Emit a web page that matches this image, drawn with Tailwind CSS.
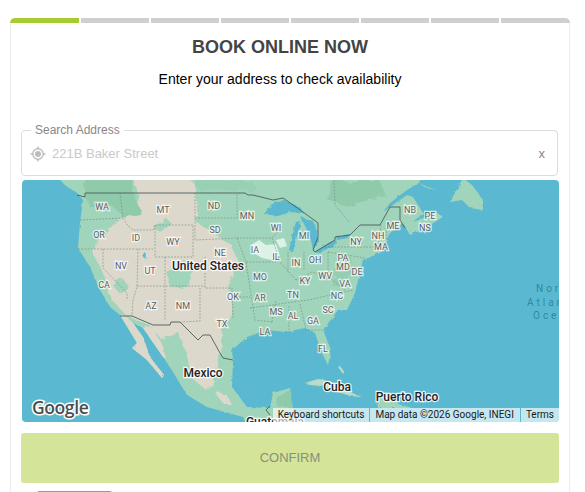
<!DOCTYPE html>
<html lang="en">
<head>
<meta charset="UTF-8">
<title>Book Online Now</title>
<meta name="viewport" content="width=device-width,initial-scale=1">
<script src="https://cdn.jsdelivr.net/npm/@tailwindcss/browser@4"></script>
</head>

<body class="bg-white h-[492px] overflow-hidden font-['Liberation_Sans',Arial,sans-serif]">
<div class="pt-[18px] px-[10px]">
  <div class="w-[560px] h-[600px] border-x border-[#ececec] rounded-t-[5px] relative">

    <!-- steps -->
    <div class="flex gap-[2px] -mx-px overflow-hidden rounded-t-[5px]">
      <div class="h-[5px] w-[69px] bg-[#a8cc2e]"></div>
      <div class="h-[5px] w-[68px] bg-[#cfcfcf]"></div>
      <div class="h-[5px] w-[68px] bg-[#cfcfcf]"></div>
      <div class="h-[5px] w-[68px] bg-[#cfcfcf]"></div>
      <div class="h-[5px] w-[68px] bg-[#cfcfcf]"></div>
      <div class="h-[5px] w-[68px] bg-[#cfcfcf]"></div>
      <div class="h-[5px] w-[68px] bg-[#cfcfcf]"></div>
      <div class="h-[5px] w-[69px] bg-[#cfcfcf]"></div>
    </div>

    <h1 class="text-[18px] leading-[20px] font-bold text-[#444] text-center mt-[14px] pr-[20px]">BOOK ONLINE NOW</h1>
    <p class="text-[14px] leading-[20px] text-black text-center mt-[12px] pr-[20px]">Enter your address to check availability</p>

    <!-- address -->
    <fieldset class="ml-[10px] w-[537px] h-[53px] mt-[34px] border border-[#dcdcdc] rounded-[4px] pl-[8px] pr-[12px] flex items-center">
      <legend class="ml-[1px] px-[4px] text-[12px] leading-[14px] text-[#888]">Search Address</legend>
      <div class="flex items-center w-full h-[41px] -mt-[4px]">
        <svg class="w-[16px] h-[16px] shrink-0" viewBox="0 0 16 16" fill="none" stroke="#bdbdbd">
          <circle cx="8" cy="8" r="5.2" stroke-width="1.4"/>
          <circle cx="8" cy="8" r="3" fill="#bdbdbd" stroke="none"/>
          <path d="M8 0.5v2.5M8 13v2.5M0.5 8h2.5M13 8h2.5" stroke-width="1.4"/>
        </svg>
        <span class="ml-[6px] text-[13px] text-[#c9c9c9]">221B Baker Street</span>
        <span class="ml-auto text-[13px] text-[#888]">x</span>
      </div>
    </fieldset>

    <!-- map -->
    <div class="relative ml-[11px] mt-[4px] w-[537px] h-[242px] rounded-[4px] overflow-hidden bg-[#5ab9d0]">
      <svg class="block w-[537px] h-[242px]" viewBox="22 180 537 242">
        <defs>
          <filter id="rough" x="-5%" y="-5%" width="110%" height="110%">
            <feTurbulence type="fractalNoise" baseFrequency="0.09" numOctaves="3" seed="4"/>
            <feDisplacementMap in="SourceGraphic" scale="9"/>
          </filter>
          <filter id="fine" x="-5%" y="-5%" width="110%" height="110%">
            <feTurbulence type="fractalNoise" baseFrequency="0.2" numOctaves="2" seed="7"/>
            <feDisplacementMap in="SourceGraphic" scale="3"/>
          </filter>
        </defs>
        <!-- land -->
        <g filter="url(#fine)">
          <path fill="#a0d5bb" d="M58,178 L66,186 L77,193 L83,200 L80,223 L78,248 L90,267 L100,290 L110,307 L120,315 L137,343 L132,348 L147,360 L162,378 L164,375 L150,357 L143,337 L133,323 L143,328 L163,357 L173,372 L187,395 L207,407 L243,417 L247,425 L290,425 L293,410 L290,388 L273,393 L270,408 L247,407 L232,387 L233,360 L232,350 L247,337 L267,330 L285,332 L305,328 L315,333 L322,353 L328,365 L331,350 L323,330 L338,310 L347,310 L355,293 L363,260 L380,253 L390,233 L403,223 L410,235 L425,228 L443,217 L437,213 L423,218 L413,222 L423,213 L413,197 L407,195 L383,212 L390,203 L407,190 L427,178 Z"/>
          <path fill="#a0d5bb" d="M450,202 L463,178 L472,185 L483,200 L483,210 L470,208 L462,200 Z"/>
          <path fill="#a0d5bb" d="M420,184 L432,188 L436,190 L425,187 Z"/>
          <path fill="#b9dcc8" d="M305,383 L318,379 L330,381 L345,390 L362,397 L350,396 L335,391 L322,386 L310,385 Z"/>
          <path fill="#a0d5bb" d="M377,397 L392,394 L398,404 L412,408 L378,408 Z"/>
          <path fill="#b9dcc8" d="M340,365 L344,372 L343,374 L339,368 Z"/>
          <!-- Baja and the Sonora coast are dry -->
          <path fill="#ddd8cc" d="M120,315 L137,343 L132,348 L147,360 L162,378 L164,375 L150,357 L143,337 L133,323 L126,316 Z"/>
          <path fill="#ddd8cc" d="M143,328 L152,326 L162,345 L166,358 L163,357 Z"/>
        </g>
        <!-- tan -->
        <g filter="url(#rough)">
          <path fill="#ddd8cc" d="M135,176 L196,176 L196,222 L232,245 L238,262 L230,285 L232,312 L222,330 L222,345 L216,352 L218,372 L208,392 L192,378 L186,352 L178,332 L160,338 L150,326 L125,314 L112,300 L104,275 L92,250 L104,232 L118,218 L140,214 L138,198 Z"/>
          <path fill="#ddd8cc" d="M215,392 L226,394 L231,404 L222,402 Z"/>
          <path fill="#8fcbab" d="M84,176 L134,176 L132,192 L142,212 L125,218 L112,206 L88,206 Z"/>
          <path fill="#a0d5bb" d="M152,226 L166,218 L172,224 L160,232 Z"/>
          <path fill="#a0d5bb" d="M166,272 L186,262 L194,272 L184,286 L172,288 Z"/>
          <path fill="#a0d5bb" d="M94,234 L106,226 L110,232 L98,244 Z"/>
          <path fill="#a0d5bb" d="M112,284 L122,278 L128,286 L118,292 Z"/>
          <path fill="#a0d5bb" d="M198,196 L214,200 L210,212 L200,216 Z" opacity="0.6"/>
          <path fill="#8fcbab" d="M276,396 L290,390 L292,408 L278,408 Z"/>
          <path fill="#8fcbab" d="M330,182 L380,180 L386,196 L345,206 L325,198 Z"/>
          <path fill="#8fcbab" d="M190,180 L250,180 L258,190 L200,190 Z" opacity="0.5"/>
          <path fill="#8fcbab" d="M338,262 L350,254 L354,274 L342,288 L332,286 Z" opacity="0.7"/>
        </g>
        <!-- Iowa/Illinois pale patches -->
        <path fill="#dcf2e6" d="M251,245 L259,240 L266,245 L276,244 L280,256 L272,260 L262,258 L252,252 Z"/>
        <path fill="#dcf2e6" d="M276,240 L284,238 L287,246 L280,248 Z"/>
        <!-- lakes -->
        <g filter="url(#fine)" fill="#5ab9d0">
          <path d="M264,214 L272,204 L284,200 L300,207 L304,214 L290,212 L278,216 Z"/>
          <path d="M296,222 L301,221 L297,236 L293,252 L289,250 L292,236 Z"/>
          <path d="M300,216 L314,222 L319,240 L313,250 L311,240 L306,228 Z"/>
          <path d="M314,252 L330,242 L336,240 L337,243 L320,253 Z"/>
          <path d="M336,236 L350,234 L348,238 L337,240 Z"/>
          <path d="M144,252 L146,254 L145,259 L143,256 Z"/>
        </g>
        <!-- state lines -->
        <g fill="none" stroke="#76857f" stroke-width="0.6" stroke-dasharray="1.8 1.4">
          <path d="M80,220 L123,218"/>
          <path d="M120,193 L123,218 L128,226 L133,230 L153,230 L155,225 L193,225 M155,225 L155,257 L193,257 L193,225"/>
          <path d="M78,249 L153,249"/>
          <path d="M103,249 L103,268 L127,293 L127,300"/>
          <path d="M138,249 L137,287 L133,300 L132,316"/>
          <path d="M137,286 L205,286"/>
          <path d="M165,257 L165,320 M205,257 L205,288 L232,288 L233,318"/>
          <path d="M200,288 L200,321 L181,322"/>
          <path d="M195,193 L195,240 L237,238 L246,262 L250,288 L255,320 L272,322"/>
          <path d="M195,218 L237,218 L237,193"/>
          <path d="M237,238 L272,238 L283,226 M272,238 L280,262 L296,280"/>
          <path d="M246,262 L276,262"/>
          <path d="M233,297 L250,297 M250,308 L308,300 L353,290"/>
          <path d="M272,322 L276,300 M289,306 L289,330 M300,304 L306,330 L322,330"/>
          <path d="M288,252 L288,272 M304,252 L304,270 M328,252 L328,277 M328,252 L365,258 M325,247 L366,247"/>
          <path d="M296,280 L312,272 L328,277 L345,290"/>
          <path d="M381,225 L378,252 M386,228 L387,240 M366,247 L378,247"/>
          <path d="M334,180 L335,205 L350,223"/>
        </g>
        <!-- borders -->
        <g fill="none" stroke="#4d5c5e" stroke-width="0.9">
          <path d="M77,195 L85,197 L85,193 L245,193 L248,195 L253,195 L273,200 L283,198 L303,212 L318,223 L318,237 L313,250 L315,252 L335,240 L335,237 L350,235 L360,225 L380,225 L390,207 L400,207 L400,220 L405,228"/>
          <path d="M120,316 L132,316 L153,325 L170,325 L171,322 L180,322 L190,332 L198,340 L203,335 L210,335 L220,353 L223,358 L233,360"/>
          <path d="M270,415 L266,410 L270,406"/>
        </g>
        <!-- labels -->
        <g font-family="Roboto, sans-serif" font-size="9" text-anchor="middle" fill="#5a5f63" stroke="#fff" stroke-opacity="0.7" stroke-width="2.5" paint-order="stroke">
          <text x="102" y="210">WA</text><text x="163" y="213">MT</text><text x="214" y="209">ND</text><text x="247" y="219">MN</text>
          <text x="99" y="238">OR</text><text x="136" y="241">ID</text><text x="173" y="245">WY</text><text x="215" y="233">SD</text>
          <text x="276" y="231">WI</text><text x="220" y="256">NE</text><text x="255" y="253">IA</text><text x="276" y="260">IL</text>
          <text x="304" y="239">MI</text><text x="296" y="266">IN</text><text x="315" y="263">OH</text><text x="356" y="245">NY</text>
          <text x="343" y="261">PA</text><text x="121" y="269">NV</text><text x="150" y="274">UT</text><text x="260" y="280">MO</text>
          <text x="305" y="284">KY</text><text x="325" y="279">WV</text><text x="343" y="270">MD</text><text x="357" y="275">DE</text>
          <text x="345" y="287">VA</text><text x="104" y="288">CA</text><text x="233" y="300">OK</text><text x="260" y="301">AR</text>
          <text x="293" y="298">TN</text><text x="337" y="299">NC</text><text x="151" y="309">AZ</text><text x="183" y="309">NM</text>
          <text x="328" y="313">SC</text><text x="222" y="327">TX</text><text x="276" y="315">MS</text><text x="293" y="319">AL</text>
          <text x="313" y="324">GA</text><text x="265" y="335">LA</text><text x="323" y="352">FL</text><text x="393" y="229">ME</text>
          <text x="378" y="239">NH</text><text x="381" y="250">MA</text><text x="410" y="213">NB</text><text x="430" y="219">PE</text>
          <text x="425" y="231">NS</text>
        </g>
        <g font-family="Roboto, sans-serif" font-size="12" font-weight="500" text-anchor="middle" fill="#1f2326" stroke="#fff" stroke-opacity="0.85" stroke-width="2.5" paint-order="stroke">
          <text x="208" y="270">United States</text><text x="203" y="377">Mexico</text>
          <text x="337" y="391">Cuba</text><text x="407" y="401">Puerto Rico</text><text x="275" y="426">Guatemala</text>
        </g>
        <g font-family="Roboto, sans-serif" font-size="10" letter-spacing="3" fill="#2b8aa6">
          <text x="536" y="292">North</text><text x="527" y="306">Atlantic</text><text x="533" y="319">Ocean</text>
        </g>
        <text x="32" y="414" font-family="'Open Sans', sans-serif" font-size="17.5" font-weight="600" letter-spacing="-0.4" fill="#4a4d50" stroke="#fff" stroke-width="3" paint-order="stroke">Google</text>
      </svg>

      <!-- attribution sits over the map -->
      <div class="absolute right-0 bottom-0 h-[14px] flex items-center bg-white/65 text-[10px] leading-[14px] text-[#1a1a1a] font-['Roboto',sans-serif] whitespace-nowrap">
        <span class="pl-[5px] pr-[5px]">Keyboard shortcuts</span>
        <span class="pl-[5px] pr-[6px] border-l border-[#5ab9d0]">Map data ©2026 Google, INEGI</span>
        <span class="px-[5px] border-l border-[#5ab9d0]">Terms</span>
      </div>
    </div>

    <button class="block ml-[10px] mt-[11px] w-[538px] h-[50px] bg-[#d4e59a] rounded-[3px] text-[13px] text-[#8a8f78]">CONFIRM</button>
    <div class="ml-[25px] mt-[8px] w-[77px] h-[8px] bg-[#9a9a9a] rounded-t-[4px]"></div>
  </div>
</div>
</body>
</html>
